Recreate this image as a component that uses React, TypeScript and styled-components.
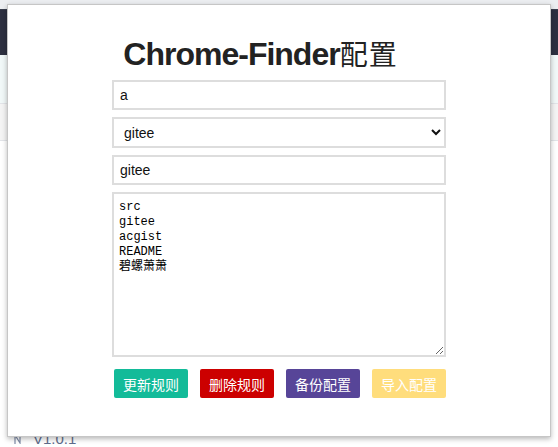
import React from "react";
import styled, { createGlobalStyle } from "styled-components";

const Global = createGlobalStyle`
  html, body { margin: 0; padding: 0; }
  body { width: 558px; height: 447px; overflow: hidden; background: #ffffff; font-family: "Liberation Sans", Arial, "Noto Sans CJK SC", sans-serif; }
`;

const Page = styled.div`
  position: relative;
  width: 558px;
  height: 447px;
  display: flex;
  flex-direction: column;
  background: #ffffff;
`;

const TopStrip = styled.div`
  height: 9px;
  background: #eceef1;
`;

const HeaderBar = styled.div`
  height: 46px;
  background: #2d3040;
  border-top: 1px solid #3c4050;
  box-sizing: border-box;
`;

const Band = styled.div<{ $h: number; $bg: string }>`
  height: ${(p) => p.$h}px;
  background: ${(p) => p.$bg};
  border-bottom: 1px solid #e2e4e8;
`;

const Spacer = styled.div`
  flex: 1;
`;

const Footer = styled.div`
  height: 16px;
  display: flex;
  align-items: center;
  gap: 12px;
  padding-left: 14px;
`;

const Version = styled.span`
  font-size: 15px;
  color: #5e6c8c;
  line-height: 16px;
`;

const Popup = styled.div`
  position: absolute;
  left: 7px;
  top: 4px;
  width: 544px;
  height: 433px;
  box-sizing: border-box;
  background: #ffffff;
  border: 1px solid #c6c6c6;
  box-shadow: 0 2px 5px rgba(0, 0, 0, 0.28);
  display: flex;
  flex-direction: column;
  align-items: center;
  padding-top: 30px;
`;

const Title = styled.h1`
  margin: 0;
  padding-right: 37px;
  font-family: "Liberation Sans", Arial, "Noto Sans CJK SC", sans-serif;
  font-weight: 700;
  font-size: 32px;
  letter-spacing: -1px;
  line-height: 37px;
  color: #222222;
  text-align: center;
`;

const TitleCJK = styled.span`
  font-weight: 400;
  font-size: 28px;
  letter-spacing: 1px;
  font-family: "Noto Sans CJK SC", sans-serif;
`;

const Form = styled.div`
  margin-top: 7px;
  width: 334px;
  display: flex;
  flex-direction: column;
  gap: 7px;
`;

const Input = styled.input`
  box-sizing: border-box;
  height: 30px;
  width: 100%;
  border: 2px solid #dddddd;
  padding: 0 6px;
  font-family: "Liberation Sans", Arial, sans-serif;
  font-size: 14px;
  color: #111111;
  outline: none;
  background: #ffffff;
`;

const Select = styled.select`
  box-sizing: border-box;
  height: 31px;
  width: 100%;
  border: 2px solid #dddddd;
  border-radius: 0;
  padding: 0 6px;
  font-family: "Liberation Sans", Arial, sans-serif;
  font-size: 14px;
  color: #111111;
  background: #ffffff;
  outline: none;
`;

const TextArea = styled.textarea`
  box-sizing: border-box;
  height: 165px;
  width: 100%;
  border: 2px solid #dddddd;
  padding: 6px 5px;
  font-family: "Liberation Mono", "Noto Sans CJK SC", monospace;
  font-size: 12px;
  line-height: 15px;
  color: #000000;
  outline: none;
  resize: vertical;
`;

const Buttons = styled.div`
  margin-top: 5px;
  display: flex;
  gap: 12px;
  padding-left: 2px;
`;

const Button = styled.button<{ $bg: string }>`
  height: 29px;
  width: 74px;
  border: none;
  border-radius: 2px;
  background: ${(p) => p.$bg};
  color: #ffffff;
  font-family: "Noto Sans CJK SC", sans-serif;
  font-size: 14px;
  padding: 0;
  cursor: pointer;
`;

export default function App() {
  return (
    <>
      <Global />
      <Page>
        <TopStrip />
        <HeaderBar />
        <Band $h={48} $bg="#f1f8f8" />
        <Band $h={36} $bg="#f4f4f4" />
        <Spacer />
        <Footer>
          <svg width="7" height="10" viewBox="0 0 7 10">
            <path d="M1 10V1l5 8V0" fill="none" stroke="#7d8aa6" strokeWidth="1.2" />
          </svg>
          <Version>V1.0.1</Version>
        </Footer>
        <Popup>
          <Title>
            Chrome-Finder<TitleCJK>配置</TitleCJK>
          </Title>
          <Form>
            <Input defaultValue="a" />
            <Select defaultValue="gitee">
              <option value="gitee">gitee</option>
            </Select>
            <Input defaultValue="gitee" />
            <TextArea defaultValue={"src\ngitee\nacgist\nREADME\n碧螺萧萧"} />
            <Buttons>
              <Button $bg="#13bb99">更新规则</Button>
              <Button $bg="#cc0000">删除规则</Button>
              <Button $bg="#574598">备份配置</Button>
              <Button $bg="#ffdd7c">导入配置</Button>
            </Buttons>
          </Form>
        </Popup>
      </Page>
    </>
  );
}
